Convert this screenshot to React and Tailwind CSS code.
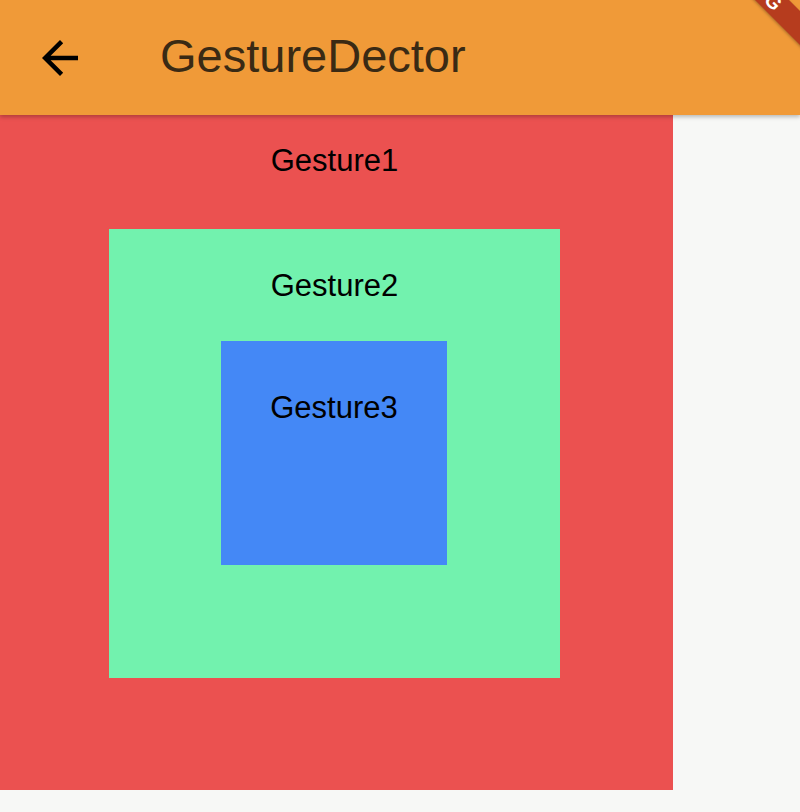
export default function App() {
    return (
        <div
            className="relative w-[800px] h-[812px] overflow-hidden bg-[#f7f8f6]"
            style={{ fontFamily: '"Liberation Sans", Arial, sans-serif' }}
        >
            <header className="relative z-10 h-[115px] bg-[#f09a38] flex items-center shadow-[0_2px_4px_rgba(0,0,0,0.25)]">
                <svg
                    viewBox="0 0 24 24"
                    className="w-[54px] h-[54px] ml-[33px] text-black"
                    fill="currentColor"
                >
                    <path d="M20 11H7.83l5.59-5.59L12 4l-8 8 8 8 1.41-1.41L7.83 13H20v-2z" />
                </svg>
                <h1 className="ml-[73px] text-[47px] leading-none text-[#3a2a14] pb-[4px]">
                    GestureDector
                </h1>
            </header>

            <div className="w-[673px] h-[675px] bg-[#eb5150] pl-[109px] pt-[30px]">
                <div className="w-[451px] text-center text-[31px] leading-none text-black">
                    Gesture1
                </div>
                <div className="mt-[53px] w-[451px] h-[449px] bg-[#72f2ae] pt-[41px]">
                    <div className="text-center text-[31px] leading-none text-black">
                        Gesture2
                    </div>
                    <div className="mt-[40px] ml-[112px] w-[226px] h-[224px] bg-[#4488f6] pt-[51px]">
                        <div className="text-center text-[31px] leading-none text-black">
                            Gesture3
                        </div>
                    </div>
                </div>
            </div>

            {/* debug banner */}
            <div className="absolute z-20 left-[603px] top-[-31px] w-[300px] h-[24px] rotate-45 bg-[#b63c1e] flex items-center justify-center shadow-[0_1px_3px_rgba(0,0,0,0.3)]">
                <span className="text-white font-bold text-[20px] leading-none tracking-wide">
                    DEBUG
                </span>
            </div>
        </div>
    );
}
